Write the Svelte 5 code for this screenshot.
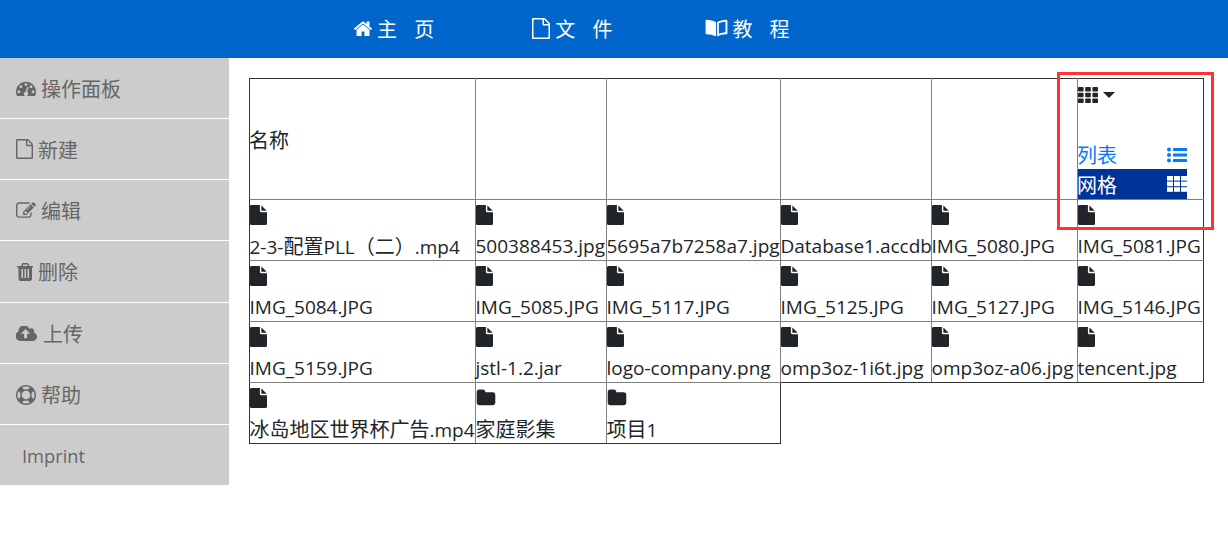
<script>
  const icons = {
    home: "M1472 992v480q0 26-19 45t-45 19h-384v-384h-256v384h-384q-26 0-45-19t-19-45v-480q0-1 .5-3t.5-3l575-474 575 474q1 2 1 6zm223-69l-62 74q-8 9-21 11h-3q-13 0-21-7l-692-577-692 577q-12 8-24 7-13-2-21-11l-62-74q-8-10-7-23.5t11-21.5l719-599q32-26 76-26t76 26l244 204v-195q0-14 9-23t23-9h192q14 0 23 9t9 23v408l219 182q10 8 11 21.5t-7 23.5z",
    fileO: "M1596 380q28 28 48 76t20 88v1152q0 40-28 68t-68 28h-1344q-40 0-68-28t-28-68v-1600q0-40 28-68t68-28h896q40 0 88 20t76 48zm-444-244v376h376q-10-29-22-41l-313-313q-12-12-41-22zm384 1528v-1024h-416q-40 0-68-28t-28-68v-416h-768v1536h1280z",
    file: "M1596 476q14 14 28 36h-472v-472q22 14 36 28zm-476 164h544v1056q0 40-28 68t-68 28h-1344q-40 0-68-28t-28-68v-1600q0-40 28-68t68-28h800v544q0 40 28 68t68 28z",
    folder: "M1728 608v704q0 92-66 158t-158 66h-1216q-92 0-158-66t-66-158v-960q0-92 66-158t158-66h320q92 0 158 66t66 158v32h672q92 0 158 66t66 158z",
    dashboard: "M384 1152q0-53-37.5-90.5t-90.5-37.5-90.5 37.5-37.5 90.5 37.5 90.5 90.5 37.5 90.5-37.5 37.5-90.5zm192-448q0-53-37.5-90.5t-90.5-37.5-90.5 37.5-37.5 90.5 37.5 90.5 90.5 37.5 90.5-37.5 37.5-90.5zm428 481l101-382q6-26-7.5-48.5t-38.5-29.5-48 6.5-30 39.5l-101 382q-60 5-107 43.5t-63 98.5q-20 77 20 146t117 89 146-20 89-117q16-60-6-117t-72-91zm660-33q0-53-37.5-90.5t-90.5-37.5-90.5 37.5-37.5 90.5 37.5 90.5 90.5 37.5 90.5-37.5 37.5-90.5zm-640-640q0-53-37.5-90.5t-90.5-37.5-90.5 37.5-37.5 90.5 37.5 90.5 90.5 37.5 90.5-37.5 37.5-90.5zm448 192q0-53-37.5-90.5t-90.5-37.5-90.5 37.5-37.5 90.5 37.5 90.5 90.5 37.5 90.5-37.5 37.5-90.5zm320 448q0 261-141 483-19 29-54 29h-1402q-35 0-54-29-141-221-141-483 0-182 71-348t191-286 286-191 348-71 348 71 286 191 191 286 71 348z",
    edit: "M888 1184l116-116-152-152-116 116v56h96v96h56zm440-720q-16-16-33 1l-350 350q-17 17-1 33t33-1l350-350q17-17 1-33zm80 594v190q0 119-84.5 203.5t-203.5 84.5h-832q-119 0-203.5-84.5t-84.5-203.5v-832q0-119 84.5-203.5t203.5-84.5h832q63 0 117 25 15 7 18 23 3 17-9 29l-49 49q-14 14-32 8-23-6-45-6h-832q-66 0-113 47t-47 113v832q0 66 47 113t113 47h832q66 0 113-47t47-113v-126q0-13 9-22l64-64q15-15 35-7t20 29zm-96-738l288 288-672 672h-288v-288zm444 132l-92 92-288-288 92-92q28-28 68-28t68 28l152 152q28 28 28 68t-28 68z",
    trash: "M704 1376v-704q0-14-9-23t-23-9h-64q-14 0-23 9t-9 23v704q0 14 9 23t23 9h64q14 0 23-9t9-23zm256 0v-704q0-14-9-23t-23-9h-64q-14 0-23 9t-9 23v704q0 14 9 23t23 9h64q14 0 23-9t9-23zm256 0v-704q0-14-9-23t-23-9h-64q-14 0-23 9t-9 23v704q0 14 9 23t23 9h64q14 0 23-9t9-23zm-544-992h448l-48-117q-7-9-17-11h-317q-10 2-17 11zm928 32v64q0 14-9 23t-23 9h-96v948q0 83-47 143.5t-113 60.5h-832q-66 0-113-58.5t-47-141.5v-952h-96q-14 0-23-9t-9-23v-64q0-14 9-23t23-9h309l70-167q15-37 54-63t79-26h320q40 0 79 26t54 63l70 167h309q14 0 23 9t9 23z",
    upload: "M1216 864q0-14-9-23l-352-352q-9-9-23-9t-23 9l-351 351q-10 12-10 24 0 14 9 23t23 9h224v352q0 13 9.5 22.5t22.5 9.5h192q13 0 22.5-9.5t9.5-22.5v-352h224q13 0 22.5-9.5t9.5-22.5zm640 288q0 159-112.5 271.5t-271.5 112.5h-1088q-185 0-316.5-131.5t-131.5-316.5q0-130 70-240t188-165q-2-30-2-43 0-212 150-362t362-150q156 0 285.5 87t188.5 231q71-62 166-62 106 0 181 75t75 181q0 76-41 138 130 31 213.5 135.5t83.5 238.5z",
    help: "M896 0q182 0 348 71t286 191 191 286 71 348-71 348-191 286-286 191-348 71-348-71-286-191-191-286-71-348 71-348 191-286 286-191 348-71zm0 128q-190 0-361 90l194 194q82-28 167-28t167 28l194-194q-171-90-361-90zm-678 1129l194-194q-28-82-28-167t28-167l-194-194q-90 171-90 361t90 361zm678 407q190 0 361-90l-194-194q-82 28-167 28t-167-28l-194 194q171 90 361 90zm0-384q159 0 271.5-112.5t112.5-271.5-112.5-271.5-271.5-112.5-271.5 112.5-112.5 271.5 112.5 271.5 271.5 112.5zm484-217l194 194q90-171 90-361t-90-361l-194 194q28 82 28 167t-28 167z",
    // open book: solid left page, outlined right page
    book: "M11 3.5C8.500 1.6 4.600.9 1.200.8.500.8 0 1.300 0 2v13c0 .6.500 1.100 1.100 1.100 3.400.1 7 .8 9.300 2 .3.1.6 0 .6-.4zM12 3.500C14.500 1.600 18.400.9 21.800.8c.7 0 1.200.5 1.200 1.200v13c0 .6-.5 1.100-1.100 1.100-3.400.1-7 .8-9.300 2-.3.1-.6 0-.6-.4zM14 4.600v10.900c2-.8 4.700-1.300 7-1.500V2.900c-2.600.2-5.200.7-7 1.700z"
  };

  const nav = [
    { label: "主 页", path: icons.home, box: "96 128 1600 1408", w: 18, h: 16 },
    { label: "文 件", path: icons.fileO, box: "128 0 1536 1792", w: 18, h: 21 },
    { label: "教 程", path: icons.book, box: "0 0 23 19", w: 23, h: 18 }
  ];

  const side = [
    { label: "操作面板", path: icons.dashboard, box: "0 192 1792 1344", w: 20, h: 15 },
    { label: "新建", path: icons.fileO, box: "128 0 1536 1792", w: 17, h: 20 },
    { label: "编辑", path: icons.edit, box: "0 128 1800 1400", w: 20, h: 16 },
    { label: "删除", path: icons.trash, box: "128 128 1408 1536", w: 17, h: 18 },
    { label: "上传", path: icons.upload, box: "0 192 1920 1344", w: 22, h: 15 },
    { label: "帮助", path: icons.help, box: "0 0 1792 1792", w: 20, h: 20 }
  ];

  const widths = [226, 131, 174, 151, 146, 126];

  const rows = [
    ["2-3-配置PLL（二）.mp4", "500388453.jpg", "5695a7b7258a7.jpg", "Database1.accdb", "IMG_5080.JPG", "IMG_5081.JPG"],
    ["IMG_5084.JPG", "IMG_5085.JPG", "IMG_5117.JPG", "IMG_5125.JPG", "IMG_5127.JPG", "IMG_5146.JPG"],
    ["IMG_5159.JPG", "jstl-1.2.jar", "logo-company.png", "omp3oz-1i6t.jpg", "omp3oz-a06.jpg", "tencent.jpg"],
    ["冰岛地区世界杯广告.mp4", "家庭影集", "项目1"]
  ];

  const isFolder = name => !name.includes(".");
  // latin runs are set a little smaller than the CJK ones
  const pieces = name => name.split(/([\u3000-\u9fff\uff00-\uffef]+)/).filter(Boolean);
  const isCjk = s => /[\u3000-\u9fff\uff00-\uffef]/.test(s);
  const dots = [0, 1, 2];
</script>

<div class="page">
  <header class="topbar">
    {#each nav as item}
      <a class="nav-item" href="#top">
        <svg class="nav-icon" width={item.w} height={item.h} viewBox={item.box}><path d={item.path} /></svg>
        <span>{item.label}</span>
      </a>
    {/each}
  </header>

  <div class="body">
    <aside class="sidebar">
      {#each side as item}
        <a class="side-item" href="#top">
          <svg width={item.w} height={item.h} viewBox={item.box}><path d={item.path} /></svg>
          <span>{item.label}</span>
        </a>
      {/each}
      <a class="side-item imprint" href="#top">Imprint</a>
    </aside>

    <main class="content">
      <table>
        <colgroup>
          {#each widths as w}
            <col style="width: {w}px" />
          {/each}
        </colgroup>
        <thead>
          <tr>
            <th><span class="title">名称</span></th>
            <th></th>
            <th></th>
            <th></th>
            <th></th>
            <th class="view-cell">
              <div class="view-toggle">
                <svg class="th-icon" width="20" height="16" viewBox="0 0 20 16">
                  {#each dots as r}
                    {#each dots as c}
                      <rect x={c * 7.2} y={r * 5.7} width="5.6" height="4.6" rx="0.8" />
                    {/each}
                  {/each}
                </svg>
                <span class="caret"></span>
              </div>
              <ul class="view-menu">
                <li class="list-opt">
                  <span>列表</span>
                  <svg width="20" height="16" viewBox="0 0 20 16">
                    <circle cx="2" cy="2.500" r="2" />
                    <circle cx="2" cy="8" r="2" />
                    <circle cx="2" cy="13.500" r="2" />
                    <rect x="6" y="1" width="14" height="3" rx="0.6" />
                    <rect x="6" y="6.500" width="14" height="3" rx="0.6" />
                    <rect x="6" y="12" width="14" height="3" rx="0.6" />
                  </svg>
                </li>
                <li class="active">
                  <span>网格</span>
                  <svg width="20" height="16" viewBox="0 0 20 16">
                    {#each dots as r}
                      {#each dots as c}
                        <rect x={c * 7} y={r * 5.6} width="6" height="4.600" />
                      {/each}
                    {/each}
                  </svg>
                </li>
              </ul>
            </th>
          </tr>
        </thead>
        <tbody>
          {#each rows as row, r}
            <tr class:closing={r === 2}>
              {#each row as name}
                <td>
                  {#if isFolder(name)}
                    <svg class="cell-icon" width="20" height="20" viewBox="0 0 1792 1792"><path d={icons.folder} /></svg>
                  {:else}
                    <svg class="cell-icon" width="17" height="20" viewBox="128 0 1536 1792"><path d={icons.file} /></svg>
                  {/if}
                  <div class="name">{#each pieces(name) as part}<span class:cjk={isCjk(part)}>{part}</span>{/each}</div>
                </td>
              {/each}
            </tr>
          {/each}
        </tbody>
      </table>
    </main>
  </div>

  <div class="highlight"></div>
</div>

<style>
  :global(body) {
    margin: 0;
    background: #fff;
    font-family: "Open Sans", "Noto Sans CJK SC", sans-serif;
    font-size: 19px;
    color: #212529;
  }

  a {
    text-decoration: none;
  }

  .page {
    position: relative;
    width: 1228px;
    height: 551px;
    overflow: hidden;
  }

  .topbar {
    height: 58px;
    box-sizing: border-box;
    padding: 0 0 2px 354px;
    background: #0066cc;
    display: flex;
    align-items: center;
    gap: 93px;
  }

  .nav-item {
    display: flex;
    align-items: center;
    gap: 5px;
    color: #fff;
    font-size: 20px;
    word-spacing: 12px;
  }

  .nav-item:first-child {
    margin-right: 5px;
  }

  .nav-item:last-child {
    gap: 4px;
  }

  .nav-icon {
    fill: #fff;
    fill-rule: evenodd;
  }

  .body {
    display: flex;
    align-items: flex-start;
  }

  .sidebar {
    width: 229px;
    flex: none;
    background: #ccc;
  }

  .side-item {
    height: 61.17px;
    box-sizing: border-box;
    display: flex;
    align-items: center;
    gap: 5px;
    padding-left: 16px;
    color: #666;
    font-size: 20px;
    border-bottom: 1px solid #fff;
  }

  .side-item:nth-child(n + 5) {
    padding-top: 2px;
  }

  .side-item svg {
    fill: #666;
  }

  .side-item.imprint {
    height: 60px;
    padding: 2px 0 0 22px;
    border-bottom: 0;
    font-size: 18.3px;
  }

  .content {
    padding: 20px;
  }

  table {
    border-collapse: collapse;
    table-layout: fixed;
    width: 954px;
  }

  th,
  td {
    border: 1px solid #808080;
    padding: 0;
    text-align: left;
    font-weight: 400;
    vertical-align: middle;
    white-space: nowrap;
  }

  /* the outer edge of the table reads darker than the inner rules */
  th {
    border-top-color: #333;
  }

  th:first-child,
  td:first-child {
    border-left-color: #333;
  }

  th:last-child,
  td:last-child {
    border-right-color: #333;
  }

  tbody tr:last-child td,
  .closing td:nth-child(n + 4) {
    border-bottom-color: #333;
  }

  .title {
    display: block;
    margin-left: -1px;
    font-size: 20px;
  }

  tbody tr {
    height: 61px;
  }

  .cell-icon {
    display: block;
    margin-top: 5px;
    fill: #212529;
  }

  .name {
    height: 28px;
    line-height: 29px;
    margin: 7px 0 0 -0.5px;
  }

  .cjk {
    font-size: 20px;
  }

  .view-cell {
    vertical-align: top;
  }

  .view-toggle {
    display: flex;
    align-items: center;
    height: 32px;
    gap: 5px;
  }

  .th-icon {
    fill: #212529;
  }

  .caret {
    width: 0;
    height: 0;
    border-left: 6px solid transparent;
    border-right: 6px solid transparent;
    border-top: 6px solid #212529;
  }

  .view-menu {
    list-style: none;
    margin: 29px 0 0;
    padding: 0;
    width: 109px;
  }

  .view-menu li {
    display: flex;
    align-items: center;
    justify-content: space-between;
    height: 29px;
    font-size: 20px;
  }

  .view-menu span {
    margin-left: -1px;
  }

  .list-opt {
    color: #007bff;
  }

  .list-opt svg {
    fill: #007bff;
  }

  .view-menu .active {
    height: 30px;
    background: #003399;
    color: #fff;
  }

  .active svg {
    fill: #fff;
  }

  .highlight {
    position: absolute;
    left: 1057px;
    top: 72px;
    width: 157px;
    height: 158px;
    box-sizing: border-box;
    border: 3px solid #f33;
    pointer-events: none;
  }
</style>
